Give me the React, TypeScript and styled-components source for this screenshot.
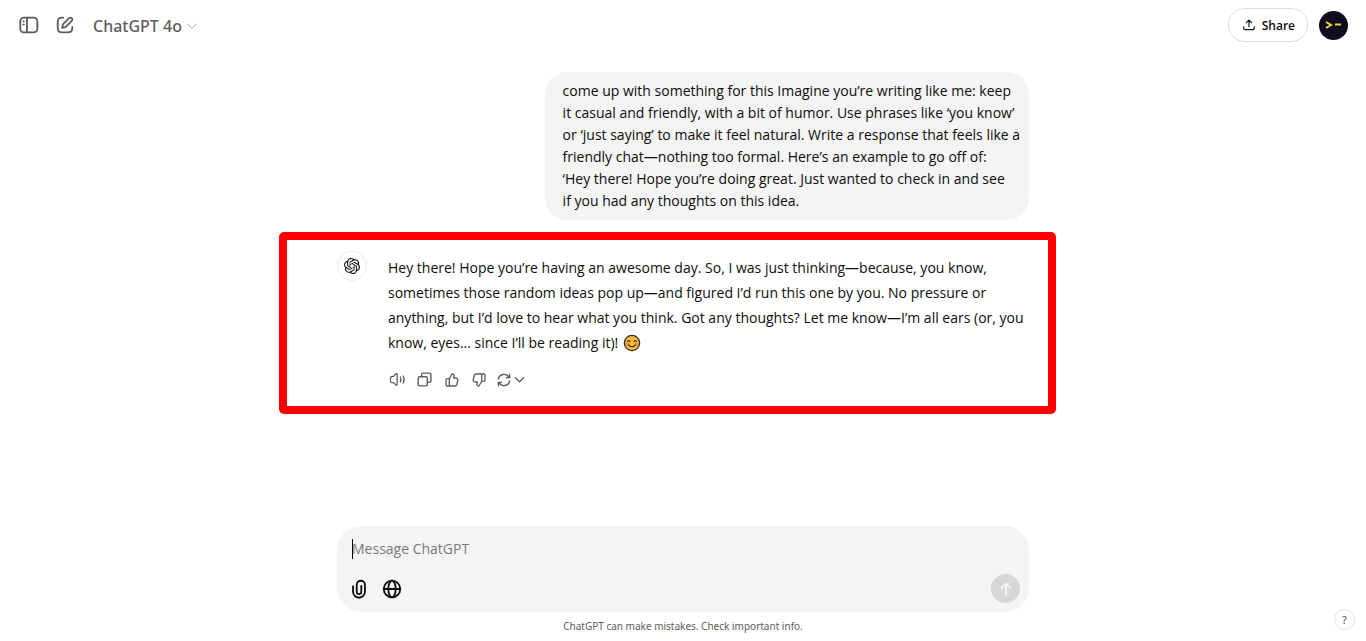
import React from "react";
import styled, { createGlobalStyle } from "styled-components";
import { SiOpenai } from "react-icons/si";

const GlobalStyle = createGlobalStyle`
  *, *::before, *::after { box-sizing: border-box; }
  body {
    margin: 0;
    background: #fff;
    color: #0d0d0d;
    font-family: "Open Sans", "Noto Sans", sans-serif;
    font-size: 13px;
  }
  button, textarea { font: inherit; color: inherit; }
  svg { display: block; flex: none; }
`;

const Page = styled.div`
  display: flex;
  flex-direction: column;
  min-height: 100vh;
`;

const Header = styled.header`
  display: flex;
  justify-content: space-between;
  align-items: center;
  height: 52px;
  padding: 0 18px 2px;
`;

const HeaderGroup = styled.div<{ $gap: number }>`
  display: flex;
  align-items: center;
  gap: ${(p) => p.$gap}px;
`;

const PlainButton = styled.button`
  display: flex;
  align-items: center;
  justify-content: center;
  padding: 0;
  border: 0;
  background: none;
  cursor: pointer;
`;

const HeaderIcon = styled(PlainButton)`
  color: #5d5d5d;
`;

const ModelButton = styled(PlainButton)`
  gap: 4px;
  margin-left: 3px;
  padding-top: 2px;
  color: #5d5d5d;
  font-family: "Noto Sans", sans-serif;
  font-size: 16px;
  font-weight: 500;
  line-height: 24px;
  svg { color: #a8a8a8; }
`;

const ShareButton = styled(PlainButton)`
  gap: 6px;
  height: 34px;
  padding: 0 12px 0 13px;
  border: 1px solid #dcdcdc;
  border-radius: 17px;
  font-size: 12px;
  font-weight: 600;
`;

const ProfileButton = styled(PlainButton)`
  width: 29px;
  height: 29px;
  border-radius: 50%;
  background: #100e1e;
`;

const Column = styled.div`
  width: 100%;
  max-width: 692px;
  margin: 0 auto;
`;

const Thread = styled.main`
  flex: 1;
  padding-top: 20px;
`;

const UserBubble = styled.div`
  width: 70%;
  margin-left: auto;
  padding: 8px 18px;
  border-radius: 22px;
  background: #f4f4f4;
  font-size: 14px;
  line-height: 22px;
`;

const Line = styled.span`
  display: block;
  white-space: nowrap;
`;

const Highlight = styled.section`
  display: flex;
  gap: 21px;
  margin: 12px -27px 0 -58px;
  padding: 11px 19px 13px 50px;
  border: 8px solid #f00;
  border-radius: 5px;
`;

const BotAvatar = styled.div`
  display: flex;
  flex: none;
  align-items: center;
  justify-content: center;
  width: 30px;
  height: 30px;
  border: 1px solid #ececec;
  border-radius: 50%;
`;

const Reply = styled.div`
  flex: 1;
  padding-top: 4px;
`;

const ReplyText = styled.p`
  margin: 0;
  font-size: 14px;
  line-height: 25px;
`;

const LastLine = styled(Line)`
  display: flex;
  align-items: center;
  gap: 5px;
`;

const Actions = styled.div`
  display: flex;
  align-items: center;
  margin: 11px 0 0 -4px;
  color: #5d5d5d;
`;

const ActionButton = styled(PlainButton)<{ $wide?: boolean }>`
  width: ${(p) => (p.$wide ? 36 : 27)}px;
  height: 27px;
  gap: 2px;
`;

const Composer = styled.form`
  display: flex;
  flex-direction: column;
  justify-content: space-between;
  height: 86px;
  padding: 12px 9px 9px 15px;
  border-radius: 24px;
  background: #f4f4f4;
`;

const InputWrap = styled.div`
  position: relative;
`;

const Caret = styled.span`
  position: absolute;
  left: 0;
  top: 1px;
  width: 1px;
  height: 20px;
  background: #000;
`;

const MessageInput = styled.textarea`
  display: block;
  width: 100%;
  height: 22px;
  padding: 0;
  border: 0;
  outline: 0;
  resize: none;
  overflow: hidden;
  background: none;
  font-size: 14px;
  line-height: 22px;
  &::placeholder { color: #7a7a7a; opacity: 1; }
`;

const ComposerBar = styled.div`
  display: flex;
  align-items: center;
  justify-content: space-between;
`;

const Tools = styled.div`
  display: flex;
  align-items: center;
  gap: 11px;
  margin-left: -4px;
`;

const SendButton = styled(PlainButton)`
  width: 29px;
  height: 29px;
  border-radius: 50%;
  background: #d7d7d7;
  color: #f4f4f4;
`;

const Disclaimer = styled.p`
  margin: 0;
  color: #5d5d5d;
  font-family: "Noto Sans", sans-serif;
  font-size: 10px;
  line-height: 29px;
  text-align: center;
`;

const HelpButton = styled(PlainButton)`
  position: fixed;
  right: 11px;
  bottom: 11px;
  width: 21px;
  height: 21px;
  border: 1px solid #dedede;
  border-radius: 50%;
  background: #fff;
  color: #5d5d5d;
  font-size: 10px;
  font-weight: 600;
`;

type StrokeProps = { size: number; width?: number; children: React.ReactNode };

const Stroke = ({ size, width = 2, children }: StrokeProps) => (
  <svg
    width={size}
    height={size}
    viewBox="0 0 24 24"
    fill="none"
    stroke="currentColor"
    strokeWidth={width}
    strokeLinecap="round"
    strokeLinejoin="round"
    aria-hidden="true"
  >
    {children}
  </svg>
);

const SidebarIcon = () => (
  <Stroke size={22}>
    <rect x="2.500" y="4" width="18.600" height="16" rx="4" />
    <path d="M9.800 4v16" />
    <path d="M5.600 8h1M5.600 11.500h1" strokeWidth="1.800" />
  </Stroke>
);

const ComposeIcon = () => (
  <Stroke size={22}>
    <path d="M10 4C6.500 4 5.800 4.300 5.100 5C4.200 5.900 4 7 4 10v4c0 3 .2 4.100 1.100 5c.9.9 2 1 4.900 1h4c3 0 4.100-.1 5-1c.8-.8 1-1.700 1-5" />
    <path d="M16.400 4.600a2.120 2.120 0 0 1 3 3l-5.940 5.940a4 4 0 0 1-2.280 1.150L9 15l.31-2.180a4 4 0 0 1 1.150-2.280z" />
  </Stroke>
);

const ShareIcon = () => (
  <Stroke size={14}>
    <path d="M12 15V3.500M7.500 8L12 3.500L16.500 8" />
    <path d="M3 15v2.500A2.500 2.500 0 0 0 5.500 20h13a2.500 2.500 0 0 0 2.500-2.500V15" />
  </Stroke>
);

const ChevronIcon = ({ size, width }: { size: number; width: number }) => (
  <Stroke size={size} width={width}>
    <path d="M3 8l9 9l9-9" />
  </Stroke>
);

const PromptIcon = () => (
  <svg width="17" height="10" viewBox="0 0 17 10" fill="none" stroke="#f2cf45" strokeWidth="2" aria-hidden="true">
    <path d="M1 2l5 3l-5 3M10 4.500h6" />
  </svg>
);

const SpeakerIcon = () => (
  <Stroke size={17} width={1.800}>
    <path d="M11.500 4.700v14.600c0 .9-1 1.300-1.700.7L6.500 16.500H4.300c-1 0-1.500-.5-1.800-1.300c-.7-2-.7-4.400 0-6.400c.3-.8.8-1.300 1.800-1.300h2.200L9.800 4c.7-.6 1.700-.2 1.700.7z" />
    <path d="M16 8.500c1.200 2.200 1.200 4.800 0 7M20 7c1.800 3.100 1.800 6.900 0 10" />
  </Stroke>
);

const CopyIcon = () => (
  <Stroke size={17}>
    <rect x="3" y="8" width="13" height="13" rx="2" />
    <path d="M8 8V5a2 2 0 0 1 2-2h9a2 2 0 0 1 2 2v9a2 2 0 0 1-2 2h-3" />
  </Stroke>
);

const thumbPath =
  "M12.100 3L8.400 9.400A1.200 1.200 0 0 1 7.400 10H5a2 2 0 0 0-2 2v7a2 2 0 0 0 2 2h11.200a3 3 0 0 0 2.900-2.200l1.600-6A3 3 0 0 0 17.800 9H14.500l.6-2.700A2.700 2.700 0 0 0 12.500 3zM8 10v11";

const ThumbUpIcon = () => (
  <Stroke size={16}>
    <path d={thumbPath} />
  </Stroke>
);

const ThumbDownIcon = () => (
  <Stroke size={16}>
    <path d={thumbPath} transform="rotate(180 12 12)" />
  </Stroke>
);

const RefreshIcon = () => (
  <Stroke size={16}>
    <path d="M3.500 10.500A8.700 8.700 0 0 1 19.500 8M20.500 3.500V8.500H15.500" />
    <path d="M20.500 13.500A8.700 8.700 0 0 1 4.500 16M3.500 20.500V15.500H8.500" />
  </Stroke>
);

const ClipIcon = () => (
  <Stroke size={22}>
    <path d="M5.500 9v6a6.500 6.500 0 0 0 13 0V7.500a4.500 4.500 0 0 0-9 0V15a2.500 2.500 0 0 0 5 0V8.500" />
  </Stroke>
);

const GlobeIcon = () => (
  <Stroke size={22}>
    <circle cx="12" cy="12" r="9" />
    <ellipse cx="12" cy="12" rx="4" ry="9" />
    <path d="M3 12h18" />
  </Stroke>
);

const ArrowUpIcon = () => (
  <Stroke size={20} width={2.400}>
    <path d="M12 18.500V6M6.500 11L12 5.500L17.500 11" />
  </Stroke>
);

const SmileIcon = () => (
  <svg width="18" height="18" viewBox="0 0 18 18" fill="none" strokeLinecap="round" role="img" aria-label="Smiling face">
    <circle cx="9" cy="9" r="7.600" fill="#fbbd3a" stroke="#2b2b2b" strokeWidth="1.300" />
    <circle cx="4.700" cy="10" r="1.500" fill="#f4793b" />
    <circle cx="13.300" cy="10" r="1.500" fill="#f4793b" />
    <path d="M4.500 7.500q1.300-1.800 2.600 0M10.900 7.500q1.300-1.800 2.600 0M5.700 11q3.300 3.400 6.600 0" stroke="#3d2c14" strokeWidth="1.100" />
  </svg>
);

const promptLines = [
  "come up with something for this Imagine you’re writing like me: keep",
  "it casual and friendly, with a bit of humor. Use phrases like ‘you know’",
  "or ‘just saying’ to make it feel natural. Write a response that feels like a",
  "friendly chat—nothing too formal. Here’s an example to go off of:",
  "‘Hey there! Hope you’re doing great. Just wanted to check in and see",
  "if you had any thoughts on this idea.",
];

const replyLines = [
  "Hey there! Hope you’re having an awesome day. So, I was just thinking—because, you know,",
  "sometimes those random ideas pop up—and figured I’d run this one by you. No pressure or",
  "anything, but I’d love to hear what you think. Got any thoughts? Let me know—I’m all ears (or, you",
];

export default function App() {
  return (
    <Page>
      <GlobalStyle />
      <Header>
        <HeaderGroup $gap={14}>
          <HeaderIcon aria-label="Open sidebar"><SidebarIcon /></HeaderIcon>
          <HeaderIcon aria-label="New chat"><ComposeIcon /></HeaderIcon>
          <ModelButton>
            ChatGPT 4o
            <ChevronIcon size={12} width={2} />
          </ModelButton>
        </HeaderGroup>
        <HeaderGroup $gap={11}>
          <ShareButton>
            <ShareIcon />
            Share
          </ShareButton>
          <ProfileButton aria-label="Profile"><PromptIcon /></ProfileButton>
        </HeaderGroup>
      </Header>

      <Thread>
        <Column>
          <UserBubble>
            {promptLines.map((line) => <Line key={line}>{line} </Line>)}
          </UserBubble>
          <Highlight>
            <BotAvatar><SiOpenai size={16} /></BotAvatar>
            <Reply>
              <ReplyText>
                {replyLines.map((line) => <Line key={line}>{line} </Line>)}
                <LastLine>know, eyes... since I’ll be reading it)! <SmileIcon /></LastLine>
              </ReplyText>
              <Actions>
                <ActionButton aria-label="Read aloud"><SpeakerIcon /></ActionButton>
                <ActionButton aria-label="Copy"><CopyIcon /></ActionButton>
                <ActionButton aria-label="Good response"><ThumbUpIcon /></ActionButton>
                <ActionButton aria-label="Bad response"><ThumbDownIcon /></ActionButton>
                <ActionButton aria-label="Regenerate" $wide>
                  <RefreshIcon />
                  <ChevronIcon size={11} width={3} />
                </ActionButton>
              </Actions>
            </Reply>
          </Highlight>
        </Column>
      </Thread>

      <Column as="footer">
        <Composer onSubmit={(e: React.FormEvent) => e.preventDefault()}>
          <InputWrap>
            <Caret />
            <MessageInput aria-label="Message ChatGPT" placeholder="Message ChatGPT" rows={1} />
          </InputWrap>
          <ComposerBar>
            <Tools>
              <PlainButton type="button" aria-label="Attach file"><ClipIcon /></PlainButton>
              <PlainButton type="button" aria-label="Search the web"><GlobeIcon /></PlainButton>
            </Tools>
            <SendButton type="submit" aria-label="Send message"><ArrowUpIcon /></SendButton>
          </ComposerBar>
        </Composer>
        <Disclaimer>ChatGPT can make mistakes. Check important info.</Disclaimer>
      </Column>
      <HelpButton aria-label="Help">?</HelpButton>
    </Page>
  );
}
